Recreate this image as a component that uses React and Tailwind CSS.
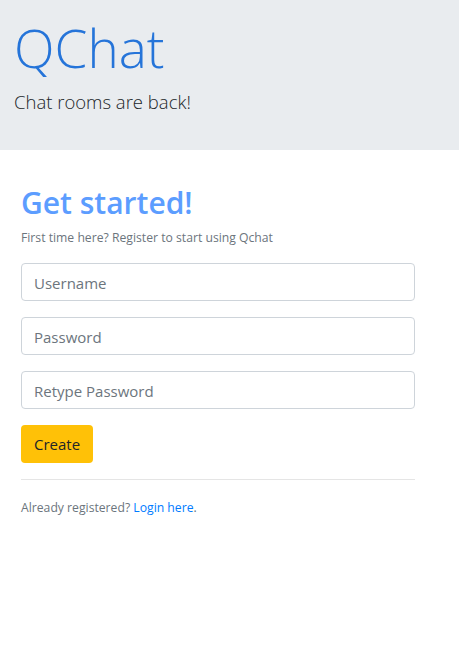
import React, { useState } from "react";

export default function App() {
  const [form, setForm] = useState({ username: "", password: "", retype: "" });

  const handleChange = (e) => {
    const { name, value } = e.target;
    setForm({ ...form, [name]: value });
  };

  return (
    <div className="min-h-screen bg-white font-['Open_Sans',sans-serif] text-[#212529]">
      <header className="h-[150px] bg-[#e9ecef] px-[14px] pt-[16px]">
        <h1 className="text-[53px] font-light leading-[1.2] text-[#2574d9]">QChat</h1>
        <p className="mt-[8px] text-[18.5px] font-light text-[#212529]">Chat rooms are back!</p>
      </header>

      <main className="px-[21px] pt-[35px]">
        <h2 className="text-[30px] font-semibold leading-[1.2] text-[#5c9dff]">Get started!</h2>
        <p className="mt-[8px] text-[12.2px] text-[#6c757d]">
          First time here? Register to start using Qchat
        </p>

        <form className="mt-[16px] flex w-[394px] flex-col gap-[16px]" onSubmit={(e) => e.preventDefault()}>
          {[
            { name: "username", type: "text", placeholder: "Username" },
            { name: "password", type: "password", placeholder: "Password" },
            { name: "retype", type: "password", placeholder: "Retype Password" },
          ].map((field) => (
            <input
              key={field.name}
              name={field.name}
              type={field.type}
              value={form[field.name]}
              onChange={handleChange}
              placeholder={field.placeholder}
              className="h-[38px] w-full rounded-[4px] border border-[#ced4da] bg-white px-[12px] pt-[2px] text-[15px] text-[#495057] placeholder-[#6c757d] focus:outline-none"
            />
          ))}
          <div>
            <button
              type="submit"
              className="h-[38px] rounded-[4px] bg-[#ffc107] px-[13px] text-[15px] text-[#212529]"
            >
              Create
            </button>
          </div>
        </form>

        <hr className="mt-[16px] w-[394px] border-t border-[#e5e5e5]" />

        <p className="mt-[19px] text-[12.2px] text-[#6c757d]">
          Already registered? <a href="#" className="text-[#007bff]">Login here</a>.
        </p>
      </main>
    </div>
  );
}
